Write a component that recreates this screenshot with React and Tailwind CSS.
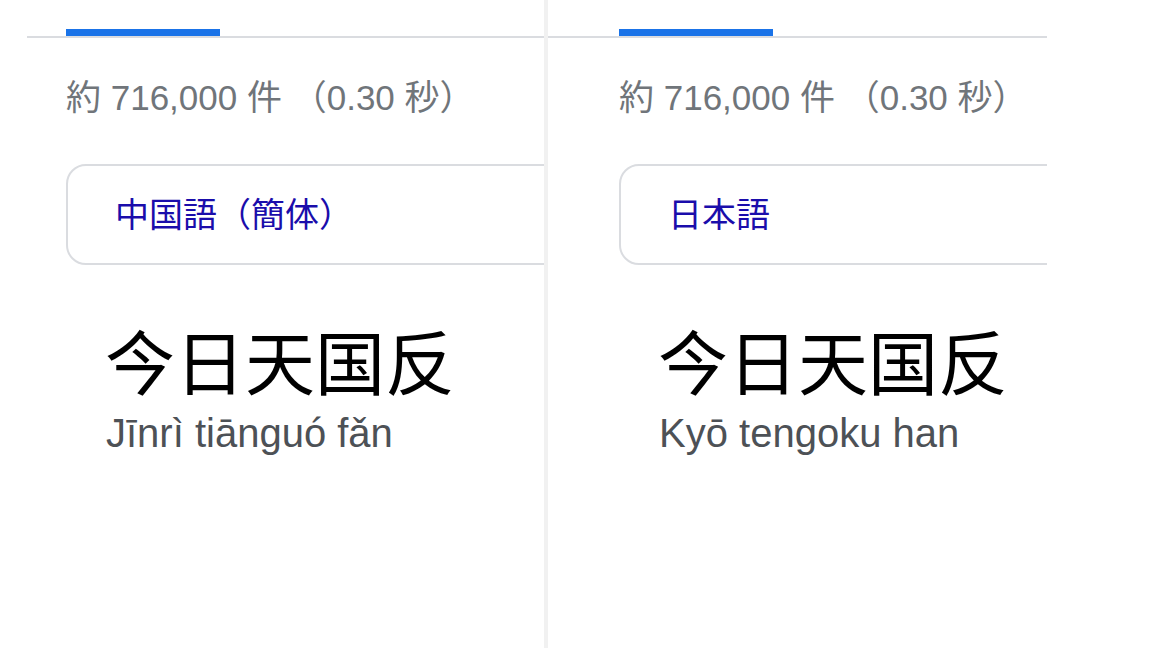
export default function App() {
  const latin = { fontFamily: '"Liberation Sans", "Noto Sans CJK JP", sans-serif' };
  const cjkJP = { fontFamily: '"Noto Sans CJK JP", sans-serif' };
  const cjkSC = { fontFamily: '"Noto Sans CJK SC", sans-serif' };

  const Panel = ({ lineLeft, padLeft, widthClass, chip, big, roman }) => (
    <div className={`${widthClass} h-full overflow-hidden shrink-0`}>
      <div className="pt-[29px]">
        <div className={`${padLeft}`}>
          <div className="h-[7px] w-[154px] bg-[#1a73e8]" />
        </div>
        <div className={`h-[2px] bg-[#dadce0] ${lineLeft}`} />
        <div className={`${padLeft}`}>
          <div
            className="mt-[42px] text-[35px] leading-none text-[#70757a] whitespace-nowrap"
            style={latin}
          >
            約 716,000 件 （0.30 秒）
          </div>
          <div className="mt-[49px] w-[700px] h-[101px] border-2 border-[#dadce0] rounded-[20px] flex items-center pl-[47px] pb-[3px]">
            <span className="text-[34px] leading-none text-[#1a0dab] whitespace-nowrap" style={cjkJP}>
              {chip}
            </span>
          </div>
          <div className="pl-[39px]">
            <div className="mt-[60px] text-[70px] leading-none text-black whitespace-nowrap" style={cjkSC}>
              {big}
            </div>
            <div className="mt-[18px] pl-[1px] text-[40px] leading-none text-[#4d5156] whitespace-nowrap" style={latin}>
              {roman}
            </div>
          </div>
        </div>
      </div>
    </div>
  );

  return (
    <div className="w-[1152px] h-[648px] bg-white flex overflow-hidden">
      <Panel
        widthClass="w-[544px]"
        lineLeft="ml-[27px]"
        padLeft="pl-[66px]"
        chip="中国語（簡体）"
        big="今日天国反"
        roman="Jīnrì tiānguó fǎn"
      />
      <div className="w-[4px] h-full bg-[#f1f1f1] shrink-0" />
      <Panel
        widthClass="w-[499px]"
        lineLeft="ml-0"
        padLeft="pl-[71px]"
        chip="日本語"
        big="今日天国反"
        roman="Kyō tengoku han"
      />
      <div className="flex-1" />
    </div>
  );
}
